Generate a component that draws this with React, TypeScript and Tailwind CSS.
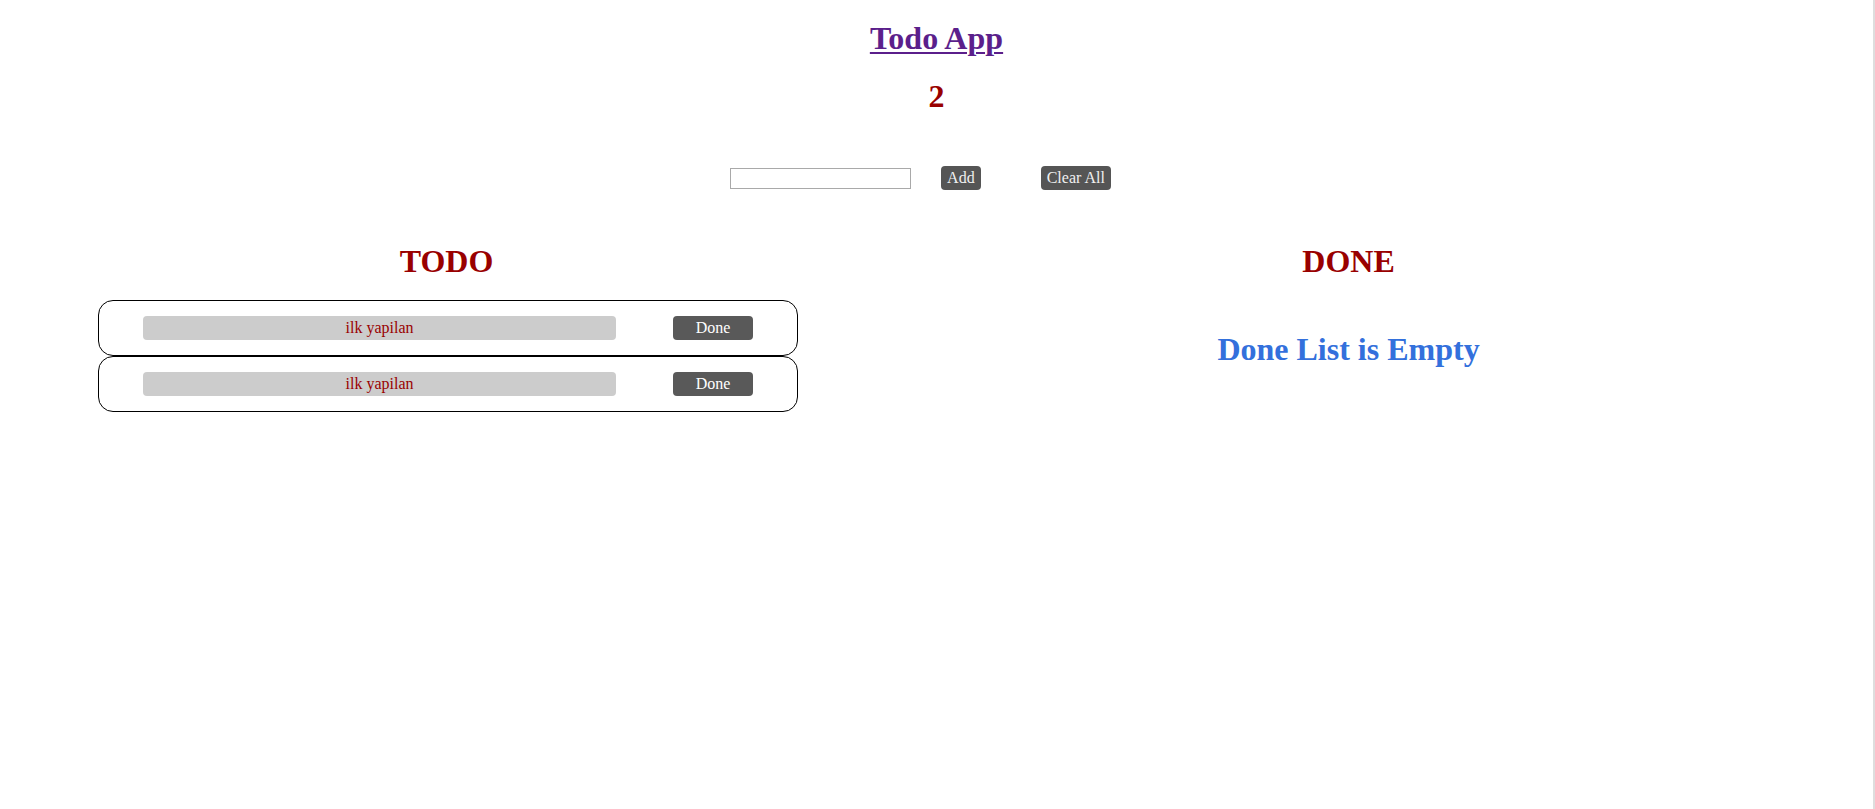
import { useState } from "react";

export default function App() {
  const [todos] = useState<string[]>(["ilk yapilan", "ilk yapilan"]);
  const [done] = useState<string[]>([]);

  return (
    <div className="min-h-screen bg-white border-r-2 border-[#dedede] font-['Liberation_Serif',serif]">
      {/* Header */}
      <div className="flex flex-col items-center pt-[22px]">
        <h1 className="text-[32px] leading-8 font-bold text-[#5b1f8b] underline decoration-2 underline-offset-[3px]">
          <a href="#">Todo App</a>
        </h1>
        <h2 className="mt-[26px] text-[32px] leading-8 font-bold text-[#990000]">{todos.length}</h2>
      </div>

      {/* Input row */}
      <div className="mt-[54px] flex items-center justify-center">
        <input
          type="text"
          className="w-[181px] h-[21px] border border-[#a9a9a9] bg-white px-1 text-[13px] outline-none"
        />
        <button className="ml-[30px] h-6 px-1.5 leading-6 text-base rounded bg-[#555] text-[#f0f0f0]">Add</button>
        <button className="ml-[60px] mr-8 h-6 px-1.5 leading-6 text-base rounded bg-[#555] text-[#f0f0f0]">Clear All</button>
      </div>

      {/* Columns */}
      <div className="mt-[55px] flex gap-[9px]">
        <div className="w-[893px]">
          <h2 className="text-center text-[32px] leading-8 font-bold text-[#990000]">TODO</h2>
          <div className="mt-[23px] ml-[98px] w-[700px] flex flex-col">
            {todos.map((t, i) => (
              <div key={i} className="flex items-center border border-black rounded-[15px] px-11 py-[15px]">
                <div className="w-[473px] h-6 leading-6 rounded bg-[#cccccc] text-center text-base text-[#990000]">
                  {t}
                </div>
                <button className="ml-[57px] w-20 h-6 leading-6 rounded bg-[#595959] text-base text-white">Done</button>
              </div>
            ))}
          </div>
        </div>
        <div className="w-[893px]">
          <h2 className="text-center text-[32px] leading-8 font-bold text-[#990000]">DONE</h2>
          {done.length === 0 && (
            <h2 className="mt-[56px] text-center text-[32px] leading-8 font-bold text-[#3370dc]">Done List is Empty</h2>
          )}
        </div>
      </div>
    </div>
  );
}
